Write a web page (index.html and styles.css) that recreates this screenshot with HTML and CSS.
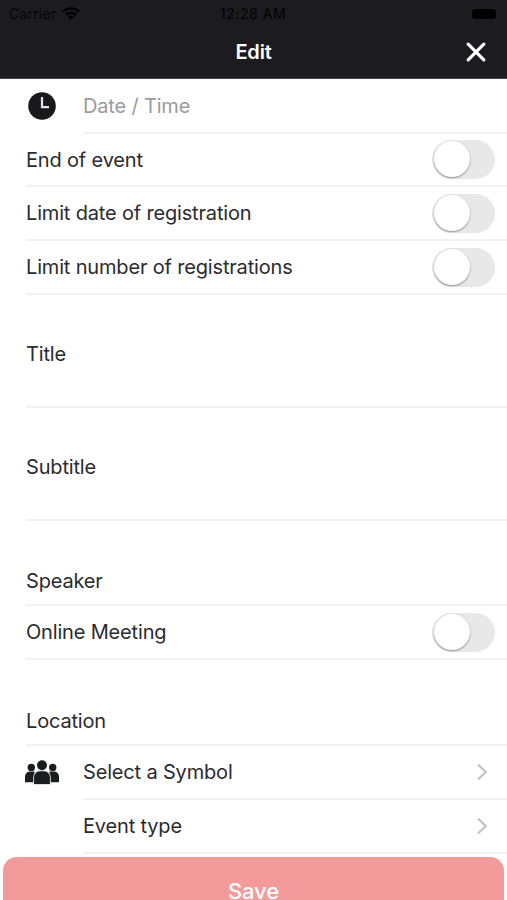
FILE: index.html
```html
<!DOCTYPE html>
<html lang="en">
<head>
    <meta charset="UTF-8">
    <meta name="viewport" content="width=device-width, initial-scale=1.0">
    <title>Edit</title>
    <link rel="stylesheet" href="styles.css">
</head>
<body>
    <header>
        <div class="status-bar">
            <div class="carrier">
                <span>Carrier</span>
                <svg width="18" height="13" viewBox="0 0 18 13">
                    <path d="M1 4.6a11.6 11.6 0 0 1 16 0M4 7.8a7.2 7.2 0 0 1 10 0" fill="none" stroke="#000" stroke-width="2.4"/>
                    <path d="M9 12.8L5.9 9.7a4.4 4.4 0 0 1 6.2 0z"/>
                </svg>
            </div>
            <span class="clock">12:28 AM</span>
            <div class="battery-wrap"><span class="battery"></span></div>
        </div>
        <div class="nav-bar">
            <h1>Edit</h1>
            <button class="close" aria-label="Close">
                <svg width="20" height="20" viewBox="0 0 20 20">
                    <path d="M2.2 2.2l15.6 15.6M17.8 2.2L2.2 17.8" stroke="#fff" stroke-width="3.2" stroke-linecap="round"/>
                </svg>
            </button>
        </div>
    </header>
    <main>
        <div class="row first indent">
            <svg class="icon time" width="28" height="28" viewBox="0 0 28 28">
                <circle cx="14" cy="14" r="13.8" fill="#19191c"/>
                <path d="M14 5v10.2h7" fill="none" stroke="#e4e4e4" stroke-width="2.2"/>
            </svg>
            <div class="field placeholder">Date / Time</div>
        </div>
        <div class="row short">
            <div class="field">End of event <span class="switch"></span></div>
        </div>
        <div class="row">
            <div class="field">Limit date of registration <span class="switch"></span></div>
        </div>
        <div class="row">
            <div class="field">Limit number of registrations <span class="switch"></span></div>
        </div>
        <div class="row tall">
            <div class="field">Title</div>
        </div>
        <div class="row tall">
            <div class="field">Subtitle</div>
        </div>
        <div class="row text first-text">
            <div class="field">Speaker</div>
        </div>
        <div class="row">
            <div class="field">Online Meeting <span class="switch"></span></div>
        </div>
        <div class="row text">
            <div class="field">Location</div>
        </div>
        <div class="row indent">
            <svg class="icon people" width="34" height="25" viewBox="0 0 34 25" fill="#1b1c1f">
                <circle cx="6.3" cy="7.4" r="3.7"/>
                <circle cx="27.7" cy="7.4" r="3.7"/>
                <path d="M0 22.2v-5.7a5 5 0 0 1 5-5h4.5v10.7zM34 22.2v-5.7a5 5 0 0 0-5-5h-4.5v10.7z"/>
                <path d="M8.6 24.6v-7.4a6.4 6.4 0 0 1 6.4-6.4h4a6.4 6.4 0 0 1 6.4 6.4v7.4z" stroke="#fff" stroke-width="0.8"/>
                <circle cx="17" cy="5.2" r="5"/>
            </svg>
            <div class="field">Select a Symbol
                <svg class="chevron" width="12" height="18" viewBox="0 0 12 18"><path d="M2 1.5L9.7 9 2 16.5"/></svg>
            </div>
        </div>
        <div class="row indent">
            <div class="icon"></div>
            <div class="field">Event type
                <svg class="chevron" width="12" height="18" viewBox="0 0 12 18"><path d="M2 1.5L9.7 9 2 16.5"/></svg>
            </div>
        </div>
    </main>
    <button class="save">Save</button>
</body>
</html>
```
FILE: styles.css
```css
* {
    box-sizing: border-box;
}
body {
    margin: 0;
    height: 900px;
    overflow: hidden;
    display: flex;
    flex-direction: column;
    font-family: Inter, "Liberation Sans", sans-serif;
    font-size: 20px;
    letter-spacing: -0.17px;
    color: #2b2b2d;
    background: #fff;
}
button {
    border: 0;
    padding: 0;
    font-family: inherit;
}
header {
    height: 79px;
    flex-shrink: 0;
    background: #1c1b1f;
    border-bottom: 1px solid #48474b;
}
.status-bar {
    display: grid;
    grid-template-columns: 1fr auto 1fr;
    align-items: center;
    height: 27px;
    padding: 0 10px 0 9px;
    color: #050506;
    font-size: 14px;
    letter-spacing: 0.2px;
}
.carrier {
    display: flex;
    align-items: center;
    gap: 6px;
}
.clock {
    font-weight: 500;
    letter-spacing: 0.5px;
}
.battery-wrap {
    display: flex;
    justify-content: flex-end;
}
.battery {
    width: 24px;
    height: 10px;
    margin-right: 1px;
    border-radius: 3px;
    background: #000;
}
.nav-bar {
    display: grid;
    grid-template-columns: 1fr auto 1fr;
    align-items: center;
    height: 50px;
    padding: 0 20px;
}
.nav-bar h1 {
    grid-column: 2;
    margin: 0;
    font-size: 20px;
    font-weight: 600;
    color: #fff;
}
.close {
    justify-self: end;
    width: 20px;
    height: 20px;
    margin-right: 1px;
    background: none;
}
.close svg {
    display: block;
}
main {
    flex-shrink: 0;
    height: 778px;
}
.row {
    display: flex;
    height: 54px;
    padding-left: 26px;
}
.row.first {
    height: 55px;
}
.row.short {
    height: 53px;
}
.row.tall {
    height: 113px;
}
.row.text {
    height: 86px;
}
.row.first-text {
    height: 85px;
}
.field {
    flex: 1;
    display: flex;
    align-items: center;
    justify-content: space-between;
    padding-right: 12px;
    border-bottom: 2px solid #f2f2f3;
}
.tall .field {
    padding-top: 6px;
}
.text .field {
    padding-top: 37px;
}
.indent .field {
    padding-right: 19px;
}
.placeholder {
    color: #9b9b9c;
}
.icon {
    width: 34px;
    margin-right: 23px;
    margin-bottom: 2px;
    flex-shrink: 0;
    align-self: center;
}
.time {
    width: 28px;
    margin-left: 2px;
    margin-right: 27px;
}
.people {
    margin-left: -1px;
    margin-right: 24px;
}
.switch {
    width: 63px;
    height: 39px;
    padding: 1px 2px;
    border-radius: 20px;
    background: #e8e8e8;
}
.switch::before {
    content: "";
    display: block;
    width: 36px;
    height: 36px;
    border-radius: 50%;
    background: #fff;
    box-shadow: 0 1px 2px rgba(0, 0, 0, 0.4);
}
.chevron {
    fill: none;
    stroke: #c3c3c5;
    stroke-width: 2.3;
}
.save {
    flex-shrink: 0;
    height: 68px;
    margin: 0 3px;
    border-radius: 14px;
    background: #f39b9b;
    color: #fff;
    font-size: 22px;
    font-weight: 500;
    letter-spacing: -0.1px;
}
```
